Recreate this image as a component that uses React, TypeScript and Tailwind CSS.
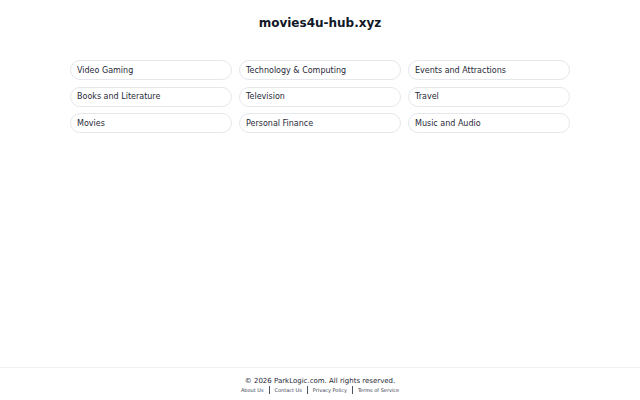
import React from "react";

const topics = [
  "Video Gaming",
  "Technology & Computing",
  "Events and Attractions",
  "Books and Literature",
  "Television",
  "Travel",
  "Movies",
  "Personal Finance",
  "Music and Audio",
];

const links = ["About Us", "Contact Us", "Privacy Policy", "Terms of Service"];

export default function App() {
  return (
    <div className="flex min-h-[400px] flex-col bg-white text-[#111827] font-['DejaVu_Sans',sans-serif]">
      <main className="flex-1">
        <h1 className="pt-[15px] text-center text-[12px] font-bold leading-[17px]">movies4u-hub.xyz</h1>
        <div className="mx-auto mt-[28px] grid w-[500px] grid-cols-3 gap-x-[7px] gap-y-[6.5px]">
          {topics.map((t) => (
            <a
              key={t}
              href="#"
              className="flex h-[20px] items-center rounded-full border border-[#e5e7eb] px-[6px] pt-px text-[8px] text-[#1f2937]"
            >
              {t}
            </a>
          ))}
        </div>
      </main>
      <footer className="border-t border-[#f0f0f0] pb-[6px] pt-[9px] text-center">
        <p className="text-[7px] leading-[9px] text-[#1f2937]">© 2026 ParkLogic.com. All rights reserved.</p>
        <div className="flex items-center justify-center text-[5px] leading-[8px] text-[#374151]">
          {links.map((l, i) => (
            <React.Fragment key={l}>
              {i > 0 && <span className="mx-[5px] h-[8px] w-px bg-[#4b5563]" />}
              <a href="#">{l}</a>
            </React.Fragment>
          ))}
        </div>
      </footer>
    </div>
  );
}
